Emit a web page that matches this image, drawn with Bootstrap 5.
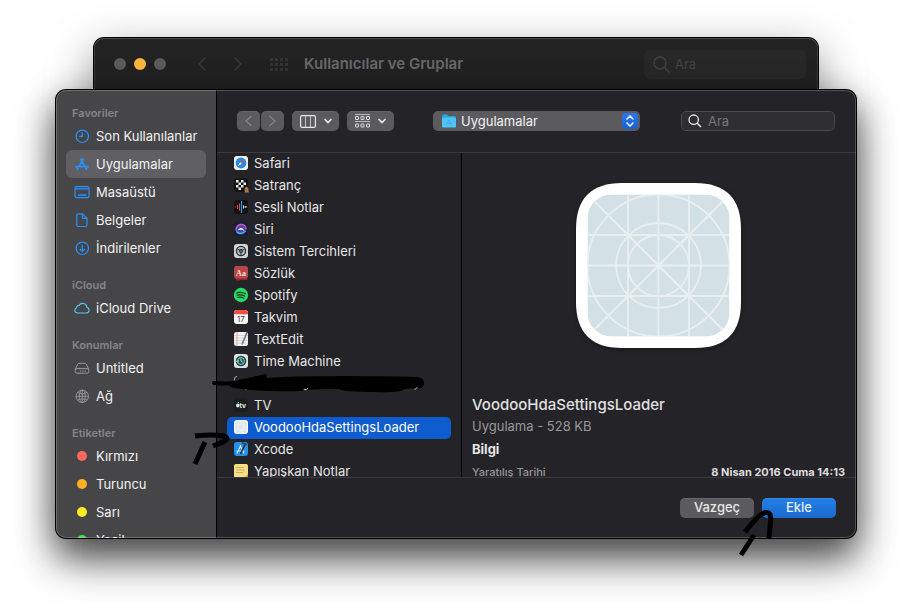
<!DOCTYPE html>
<html lang="tr">
<head>
<meta charset="utf-8">
<meta name="viewport" content="width=device-width, initial-scale=1">
<title>Kullanıcılar ve Gruplar</title>
<link href="https://cdn.jsdelivr.net/npm/bootstrap@5.3.0/dist/css/bootstrap.min.css" rel="stylesheet">
<style>
body{background:#fff;font-family:Inter,"Liberation Sans",sans-serif;font-size:13px;line-height:20px;color:#e2e2e3;height:100vh;overflow:hidden;padding:38px 56px 0}
svg{display:block;flex:none}
.back-win{margin:0 38px;height:52px;background:#222223;border-radius:10px 10px 0 0;padding:0 12px 0 20px;box-shadow:0 0 0 1px #000,inset 0 1px 0 #4b4b4c,inset 1px 0 0 #3b3b3c,inset -1px 0 0 #3b3b3c,0 16px 44px rgba(0,0,0,.5)}
.light{width:12px;height:12px;border-radius:50%;background:#5b5a5f;border:0;padding:0}
.light-min{background:#fdb63e}
.ghost-btn{background:none;border:0;padding:0;color:#3a3a3c}
.ghost-grid{color:#343436}
.back-title{font-size:15px;font-weight:600;color:#69696b;margin:0}
.back-search{width:162px;height:29px;border-radius:6px;background:#282829;color:#434345;padding:0 9px;gap:5px}
.back-search input,.find input{background:none;border:0;outline:0;color:inherit;padding:0;min-width:0}
.back-search input::placeholder{color:#434345}
.sheet{height:calc(100vh - 164px);background:#242328;border-radius:10px;box-shadow:0 0 0 1px #000,0 22px 40px rgba(0,0,0,.62),0 8px 34px rgba(0,0,0,.34)}
.sheet-body{border-radius:10px;overflow:hidden}
.sheet-rim{position:absolute;inset:0;border-radius:10px;border:1px solid rgba(255,255,255,.22);pointer-events:none}
.side{width:161px;flex:none;background:#464648;border-right:1px solid #000;padding:0 10px;overflow:hidden}
.side-head{font-size:11px;font-weight:600;line-height:18px;color:#858587;padding:14px 6px 0;margin:0}
.side-link{height:28px;padding:0 8px;gap:6px;border-radius:6px;color:#f2f2f3;font-weight:400;text-decoration:none;white-space:nowrap}
.side-link.active{background:#605f64}
.side-link svg{width:16px;height:16px;color:#2791ff}
.side-link svg.dim{color:#9a9a9c}
.side-link svg.sky{color:#54c5fa}
.tools{height:63px;padding:0 21px 0 20px;border-bottom:1px solid #3b3a40;flex:none}
.tool{height:20px;border:0;border-radius:5px;background:#5b5a5f;color:#e6e6e7;padding:0;box-shadow:inset 0 1px 0 rgba(255,255,255,.06)}
.tool-pair{gap:1px}
.tool-nav{width:23px;color:#858489}
.tool-view{width:47px}
.place{height:20px;margin:0 41px 0 39px;border-radius:5px;background:#5b5a5f}
.place>*{grid-area:1/1}
.place select{appearance:none;background:none;border:0;outline:0;color:#f2f2f3;font-size:13px;line-height:20px;padding:0 24px 0 28px;width:100%;height:20px}
.place option{color:#000}
.knob{width:16px;height:16px;border-radius:4px;background:linear-gradient(#2a7af0,#1a5fd4);pointer-events:none;margin-right:2px}
.find{width:154px;height:20px;border-radius:5px;background:#2f2e33;border:1px solid #4a494e;padding:0 6px;gap:6px;color:#e6e6e7}
.find input::placeholder{color:#77767b}
.files{width:245px;flex:none;border-right:1px solid #000;padding:0 10px;overflow:hidden}
.file{height:22px;line-height:20px;padding:0 7px 2px;gap:6px;border-radius:5px;color:#e6e6e7;font-weight:400;text-decoration:none;white-space:nowrap}
.file.active{background:#0f5ccf;color:#fff}
.file svg{width:14px;height:14px;overflow:visible}
.preview{padding:30px 11px 0 10px;overflow:hidden}
.app-art{width:165px;height:165px;filter:drop-shadow(0 1px 2px rgba(0,0,0,.4))}
.app-name{font-size:15px;line-height:20px;font-weight:500;color:#e0e0e1;margin:47px 0 0}
.app-kind{line-height:22px;color:#98979b;margin:0}
.app-info{font-size:13px;line-height:24px;font-weight:700;color:#e6e6e7;margin:0}
.app-meta{font-size:11px;line-height:22px;margin:0}
.app-meta dt{font-weight:500;color:#98979b}
.app-meta dd{font-weight:700;color:#dcdcdd;margin:0}
.foot{height:61px;border-top:1px solid #3b3a40;padding:0 20px;gap:8px;flex:none}
.act{width:74px;height:20px;border:0;border-radius:5px;background:#5b5a5f;color:#e6e6e7;font-size:13px;line-height:18px;font-weight:500;padding:0 0 2px;box-shadow:inset 0 1px 0 rgba(255,255,255,.08)}
.act-main{background:linear-gradient(#2280e6,#1c69cd);color:#e8effa}
.ink{position:absolute;left:154px;top:280px;pointer-events:none}
</style>
<script src="https://cdn.jsdelivr.net/npm/bootstrap@5.3.0/dist/js/bootstrap.bundle.min.js"></script>
</head>
<body>
<header class="back-win d-flex align-items-center">
  <div class="d-flex gap-2">
    <button class="light" aria-label="Kapat"></button><button class="light light-min" aria-label="Küçült"></button><button class="light" aria-label="Büyüt"></button>
  </div>
  <button class="ghost-btn ms-4 ps-2" aria-label="Geri"><svg width="8" height="14" fill="none" stroke="currentColor" stroke-width="1.3"><path d="M7.500 0.500L1 7l6.500 6.500"/></svg></button>
  <button class="ghost-btn ms-4 ps-1" aria-label="İleri"><svg width="8" height="14" fill="none" stroke="currentColor" stroke-width="1.300"><path d="M0.500 0.500L7 7L0.500 13.500"/></svg></button>
  <button class="ghost-btn ghost-grid ms-4 ps-1" aria-label="Tümünü göster"><svg width="18" height="13" stroke="currentColor" stroke-width="3" stroke-dasharray="3 2"><path d="M0 1.500h18M0 6.500h18M0 11.500h18"/></svg></button>
  <h1 class="back-title ms-3">Kullanıcılar ve Gruplar</h1>
  <label class="back-search d-flex align-items-center ms-auto"><svg width="17" height="17" fill="none" stroke="currentColor" stroke-width="1.300"><circle cx="7" cy="7" r="6"/><path d="M11.500 11.500l5 5"/></svg><input class="w-100" type="search" placeholder="Ara" aria-label="Ara"></label>
</header>

<main class="sheet position-relative">
  <div class="sheet-body d-flex h-100">
    <nav class="side">
      <h2 class="side-head">Favoriler</h2>
      <a href="#" class="side-link d-flex align-items-center"><svg viewBox="0 0 16 16" fill="none" stroke="currentColor" stroke-width="1.200"><circle cx="8.300" cy="8.300" r="6.200"/><path d="M8.300 4.200V8.300H5"/></svg>Son Kullanılanlar</a>
      <a href="#" class="side-link active d-flex align-items-center"><svg viewBox="0 0 16 16" fill="none" stroke="currentColor" stroke-width="1.800" stroke-linecap="round"><path d="M9.200 3.200L4.900 10.600M6.800 3.200L12.600 13.400M2 10.700h6.800M12.300 10.700H14M3.300 13.200l.4-.6"/></svg>Uygulamalar</a>
      <a href="#" class="side-link d-flex align-items-center"><svg viewBox="0 0 16 16" fill="none" stroke="currentColor" stroke-width="1.200"><rect x="1" y="2.600" width="14" height="11" rx="1.500"/><path d="M1 4.800h14"/><path d="M4 11h8.500" stroke-width="1.600"/></svg>Masaüstü</a>
      <a href="#" class="side-link d-flex align-items-center"><svg viewBox="0 0 16 16" fill="none" stroke="currentColor" stroke-width="1.200" stroke-linejoin="round"><path d="M8.500 1.900H4.200a1.400 1.400 0 0 0-1.400 1.400v9.800a1.400 1.400 0 0 0 1.400 1.400h7.400a1.400 1.400 0 0 0 1.400-1.400V6.400zM8.500 1.900v3.500a1 1 0 0 0 1 1H13"/></svg>Belgeler</a>
      <a href="#" class="side-link d-flex align-items-center"><svg viewBox="0 0 16 16" fill="none" stroke="currentColor" stroke-width="1.200"><circle cx="8.300" cy="8.300" r="6.200"/><path d="M8.300 4.800v6.500M5.900 9L8.300 11.400l2.400-2.400"/></svg>İndirilenler</a>
      <h2 class="side-head">iCloud</h2>
      <a href="#" class="side-link d-flex align-items-center"><svg class="sky" viewBox="0 0 16 16" fill="none" stroke="currentColor" stroke-width="1.200"><path d="M3.500 13h9a2.900 2.900 0 0 0 .4-5.700A4.300 4.300 0 0 0 5 5.400 2.400 2.400 0 0 0 2.500 7.800 2.700 2.700 0 0 0 3.500 13z"/></svg>iCloud Drive</a>
      <h2 class="side-head">Konumlar</h2>
      <a href="#" class="side-link d-flex align-items-center"><svg class="dim" viewBox="0 0 16 16" fill="none" stroke="currentColor" stroke-width="1"><path d="M1.300 9.300L3.700 4.200a1.500 1.500 0 0 1 1.300-.9h6a1.500 1.500 0 0 1 1.300.9l2.400 5.100"/><rect x="1.200" y="8.600" width="13.600" height="4.600" rx="1.700"/><path d="M6 11h6" stroke-dasharray="1 .6"/></svg>Untitled</a>
      <a href="#" class="side-link d-flex align-items-center"><svg class="dim" viewBox="0 0 16 16" fill="none" stroke="currentColor" stroke-width=".9"><circle cx="8.300" cy="8.300" r="6.200"/><ellipse cx="8.300" cy="8.300" rx="3" ry="6.200"/><path d="M8.300 2.100v12.400M2.100 8.300h12.400M3.600 4.600q4.700 2.600 9.400 0M3.600 12q4.700-2.600 9.400 0"/></svg>Ağ</a>
      <h2 class="side-head">Etiketler</h2>
      <a href="#" class="side-link d-flex align-items-center"><svg viewBox="0 0 16 16"><circle cx="8" cy="8" r="5" fill="#ff6961"/></svg>Kırmızı</a>
      <a href="#" class="side-link d-flex align-items-center"><svg viewBox="0 0 16 16"><circle cx="8" cy="8" r="5" fill="#ffb020"/></svg>Turuncu</a>
      <a href="#" class="side-link d-flex align-items-center"><svg viewBox="0 0 16 16"><circle cx="8" cy="8" r="5" fill="#ffec1f"/></svg>Sarı</a>
      <a href="#" class="side-link d-flex align-items-center"><svg viewBox="0 0 16 16"><circle cx="8" cy="8" r="5" fill="#3fe04f"/></svg>Yeşil</a>
    </nav>

    <section class="d-flex flex-column flex-grow-1">
      <div class="tools d-flex align-items-center">
        <div class="tool-pair d-flex">
          <button class="tool tool-nav d-flex align-items-center justify-content-center" aria-label="Geri"><svg width="7" height="12" fill="none" stroke="currentColor" stroke-width="1.200"><path d="M6.500 1l-5.500 5 5.500 5"/></svg></button>
          <button class="tool tool-nav d-flex align-items-center justify-content-center" aria-label="İleri"><svg width="7" height="12" fill="none" stroke="currentColor" stroke-width="1.200"><path d="M.5 1L6 6l-5.500 5"/></svg></button>
        </div>
        <button class="tool tool-view d-flex align-items-center justify-content-center gap-2 ms-2" aria-label="Sütun görünümü"><svg width="16" height="13" fill="none" stroke="currentColor"><rect x=".6" y=".6" width="14.800" height="11.800" rx="1.500" stroke-width="1.200"/><path d="M5.500 1v11M10.500 1v11" stroke-opacity=".75"/></svg><svg width="8" height="6" fill="none" stroke="currentColor" stroke-width="1.700" stroke-linecap="round"><path d="M1 1.500l3 3 3-3"/></svg></button>
        <button class="tool tool-view d-flex align-items-center justify-content-center gap-2 ms-2" aria-label="Gruplama"><svg width="15" height="14" fill="none" stroke="currentColor"><path d="M0 .5h15M0 7.500h15" stroke-opacity=".7"/><rect x=".5" y="2.500" width="3" height="3" rx=".5"/><rect x="6" y="2.500" width="3" height="3" rx=".5"/><rect x="11.500" y="2.500" width="3" height="3" rx=".5"/><rect x=".5" y="10" width="3" height="3" rx=".5"/><rect x="6" y="10" width="3" height="3" rx=".5"/><rect x="11.500" y="10" width="3" height="3" rx=".5"/></svg><svg width="8" height="6" fill="none" stroke="currentColor" stroke-width="1.700" stroke-linecap="round"><path d="M1 1.500l3 3 3-3"/></svg></button>
        <div class="place d-grid align-items-center flex-grow-1">
          <svg class="ms-2" width="16" height="14"><path d="M1 2q0-1.500 1.500-1.500h3.500l1.500 1.500h6q1.500 0 1.500 1.500V5H1z" fill="#2ba3dc"/><rect x="1" y="3.500" width="14" height="10" rx="1.200" fill="#4fc3f5"/><path d="M8 6l-2.600 4.500M8 6l2.600 4.500M5.500 9.500h5" stroke="#3bb0e6" fill="none"/></svg>
          <select aria-label="Konum"><option>Uygulamalar</option></select>
          <span class="knob d-flex align-items-center justify-content-center ms-auto"><svg width="8" height="12" fill="none" stroke="#fff" stroke-width="1.500" stroke-linecap="round" stroke-linejoin="round"><path d="M1 4l3-3 3 3M1 8l3 3 3-3"/></svg></span>
        </div>
        <label class="find d-flex align-items-center"><svg width="14" height="14" fill="none" stroke="currentColor" stroke-width="1.300"><circle cx="5.700" cy="5.700" r="4.700"/><path d="M9 9l4 4" stroke-width="1.600"/></svg><input class="w-100" type="search" placeholder="Ara" aria-label="Ara"></label>
      </div>

      <div class="d-flex flex-grow-1 overflow-hidden">
        <div class="files">
          <a href="#" class="file d-flex align-items-center"><svg viewBox="0 0 14 14"><rect width="14" height="14" rx="3" fill="#f2f2f3"/><circle cx="7" cy="7" r="5.400" fill="#238ae8"/><path d="M10.800 3.200L6.200 6.200l1.600 1.600z" fill="#ff463c"/><path d="M3.200 10.800l3-4.600 1.600 1.600z" fill="#fff"/></svg>Safari</a>
          <a href="#" class="file d-flex align-items-center"><svg viewBox="0 0 14 14"><rect width="14" height="14" rx="3" fill="#151515"/><path d="M2 2h2.500v2.500H2zM7 2h2.500v2.500H7zM4.500 4.500H7V7H4.500zM9.500 4.500H12V7H9.500zM2 7h2.500v2.500H2zM7 7h2.500v2.500H7zM4.500 9.500H7V12H4.500z" fill="#eee"/><path d="M10.500 14.500q.8-2.500 0-4l1.800-2 2 1.500q.2 2 .5 4.500z" fill="#a9794a"/></svg>Satranç</a>
          <a href="#" class="file d-flex align-items-center"><svg viewBox="0 0 14 14"><rect width="14" height="14" rx="3" fill="#111"/><path d="M1.500 6.500v1M3.500 5v4M5.500 3.500v7" stroke="#e5484a"/><path d="M7.500 1v12" stroke="#2b9cf5" stroke-width="1.200"/><path d="M9.500 5.500v3M11.200 6v2M12.700 6.500v1" stroke="#ddd"/></svg>Sesli Notlar</a>
          <a href="#" class="file d-flex align-items-center"><svg viewBox="0 0 14 14"><rect width="14" height="14" rx="3" fill="#1b1c3d"/><circle cx="7" cy="7" r="5.600" fill="#4d46a8"/><path d="M2 8.500q.5-6 5.500-6.200Q12 3 12.200 7" stroke="#c65ab5" stroke-width="1.300" fill="none"/><path d="M2.500 9.500q3.500 4 9-.5" stroke="#30b9dd" stroke-width="1.500" fill="none"/><path d="M3.800 8.200q3.700-5.400 6.600.8-3.200-2.200-6.600-.8z" fill="#f2f5ff"/></svg>Siri</a>
          <a href="#" class="file d-flex align-items-center"><svg viewBox="0 0 14 14"><rect width="14" height="14" rx="3" fill="#ced4d7"/><circle cx="7" cy="7" r="4.600" fill="#b8bdc0" stroke="#303438" stroke-width="1.400"/><circle cx="7" cy="7" r="1.700" fill="none" stroke="#303438"/><path d="M7 7L3.500 5M7 7v4M7 7l3.500-2" stroke="#303438"/></svg>Sistem Tercihleri</a>
          <a href="#" class="file d-flex align-items-center"><svg viewBox="0 0 14 14"><path d="M1 10h12v4H6l-1 1-1-1-.7 1-1-1z" fill="#8c2a2c"/><rect width="14" height="12.500" rx="2.500" fill="#b84648"/><text x="7" y="9.500" text-anchor="middle" font-family="Liberation Serif" font-weight="700" font-size="8" fill="#f6dfdd">Aa</text></svg>Sözlük</a>
          <a href="#" class="file d-flex align-items-center"><svg viewBox="0 0 14 14"><circle cx="7" cy="7" r="7.200" fill="#2cd765"/><path d="M2.800 4.800q4.500-1.300 8.500 1M3.200 7.200q4-1 7.400.9M3.700 9.400q3.200-.8 6 .8" stroke="#123a20" stroke-width="1.200" stroke-linecap="round" fill="none"/></svg>Spotify</a>
          <a href="#" class="file d-flex align-items-center"><svg viewBox="0 0 14 14"><rect width="14" height="14" rx="3" fill="#f7f7f7"/><path d="M0 4.200V3a3 3 0 0 1 3-3h8a3 3 0 0 1 3 3v1.200z" fill="#f54c44"/><text x="7" y="11.800" text-anchor="middle" font-size="8" fill="#444">17</text></svg>Takvim</a>
          <a href="#" class="file d-flex align-items-center"><svg viewBox="0 0 14 14"><rect width="14" height="14" rx="2.500" fill="#f4f4f4"/><path d="M0 3.500h14M0 6h14M0 8.500h14M0 11h14" stroke="#c5c8cc" stroke-width=".7"/><path d="M3 0v14" stroke="#ec8d8d" stroke-width=".8"/><path d="M13 .5L8 12.500" stroke="#6e7d8d" stroke-width="1.700"/></svg>TextEdit</a>
          <a href="#" class="file d-flex align-items-center"><svg viewBox="0 0 14 14"><rect width="14" height="14" rx="3" fill="#dde3e2"/><circle cx="7" cy="7" r="5.300" fill="#164c4b"/><circle cx="7" cy="7" r="3.400" fill="none" stroke="#a6d8cf" stroke-width=".9"/><path d="M7 4.500V7l1.800 1.200M1.800 6.500l1.600 1.600L5 6.500" stroke="#e8f5f2" fill="none" stroke-width=".9"/></svg>Time Machine</a>
          <a href="#" class="file d-flex align-items-center" aria-label="Uygulama"><svg viewBox="0 0 14 14"><path d="M.5 4.500V3A2.500 2.500 0 0 1 3 .5M11 13.500h1.500q1-.5 1-1.500" fill="none" stroke="#a9a9ab"/></svg></a>
          <a href="#" class="file d-flex align-items-center"><svg viewBox="0 0 14 14"><rect width="14" height="14" rx="3" fill="#17201f"/><ellipse cx="3.800" cy="7.500" rx="1.700" ry="1.900" fill="#eee"/><path d="M4 5l.8-1" stroke="#eee" stroke-width=".8"/><text x="5.500" y="9.500" font-size="6.500" font-weight="700" fill="#eee">tv</text></svg>TV</a>
          <a href="#" class="file active d-flex align-items-center"><svg viewBox="0 0 14 14"><rect width="14" height="14" rx="3" fill="#fff"/><rect x="1.200" y="1.200" width="11.600" height="11.600" rx="2" fill="#dde7eb"/><path d="M4.500 1v12M9.500 1v12M1 4.500h12M1 9.500h12" stroke="#eaf0f2" stroke-width=".6"/><circle cx="7" cy="7" r="3.400" fill="none" stroke="#f2f6f7" stroke-width=".7"/></svg>VoodooHdaSettingsLoader</a>
          <a href="#" class="file d-flex align-items-center"><svg viewBox="0 0 14 14"><rect width="14" height="14" rx="3" fill="#2492ed"/><path d="M7 3L3 11.500M6 3.500l4 8M2.500 9h8" stroke="#d8efff" stroke-width="1.100"/><path d="M11.500 1.500L6.500 12" stroke="#25323f" stroke-width="1.600"/><path d="M8 .8l4.700 2" stroke="#3b4550" stroke-width="2"/></svg>Xcode</a>
          <a href="#" class="file d-flex align-items-center"><svg viewBox="0 0 14 14"><rect width="14" height="14" rx="2" fill="#f6df86"/><path d="M2 3.500h8M2 6h9M2 8.500h7" stroke="#bca552" stroke-width=".8"/><path d="M10 14l4-4v2a2 2 0 0 1-2 2z" fill="#c9a73f"/></svg>Yapışkan Notlar</a>
        </div>
        <article class="preview flex-grow-1">
          <svg class="app-art mx-auto" viewBox="0 0 165 165" role="img" aria-label="Uygulama simgesi">
            <defs><clipPath id="plate"><rect x="11.500" y="11.500" width="142" height="142" rx="24"/></clipPath></defs>
            <path d="M46 0h73q46 0 46 46v73q0 46-46 46H46q-46 0-46-46V46Q0 0 46 0z" fill="#fff"/>
            <g clip-path="url(#plate)"><rect x="11.500" y="11.500" width="142" height="142" fill="#d3e0e6"/>
            <g fill="none" stroke="#e9eff1" stroke-width="1.800"><path d="M52 10v145M82.500 10v145M113 10v145M10 52h145M10 82.500h145M10 113h145"/><path d="M10 10l145 145M155 10L10 155" stroke-width="2.200"/><circle cx="82.500" cy="82.500" r="30.500"/><circle cx="82.500" cy="82.500" r="42.500"/><circle cx="82.500" cy="82.500" r="71"/></g></g>
          </svg>
          <h2 class="app-name">VoodooHdaSettingsLoader</h2>
          <p class="app-kind">Uygulama - 528 KB</p>
          <h3 class="app-info">Bilgi</h3>
          <dl class="app-meta d-flex justify-content-between"><dt>Yaratılış Tarihi</dt><dd>8 Nisan 2016 Cuma 14:13</dd></dl>
        </article>
      </div>

      <div class="foot d-flex align-items-center justify-content-end">
        <button class="act">Vazgeç</button>
        <button class="act act-main">Ekle</button>
      </div>
    </section>
  </div>
  <div class="sheet-rim"></div>
  <!-- hand-drawn marks over the window -->
  <svg class="ink" width="572" height="190" viewBox="210 370 572 190" overflow="visible" fill="none" stroke="#000" stroke-linecap="round">
    <path d="M214 383q12 1 22 0" stroke-width="4"/>
    <path d="M229 382l37-8 1 4 15-1q60-2 136 0 6 1 6 6 0 5-5 5-6 0-14 1-4 4-30 3-32 0-36-3-20 0-34 1-4 2-34 1-30-1-40-4-4-2-2-5z" fill="#000" stroke="none"/>
    <path d="M304 389.500q3 1 4-1M415 389.500l2-2" stroke="#c8c8ca" stroke-width="1"/>
    <path d="M195 436q18-2 29 0 8 3-6 8l-5 2M205 442l-10 22" stroke-width="5" stroke-linecap="butt"/>
    <path d="M745 532q14-18 20-19.500 7-1 5.500 9l-1.500 16.500M754 535l-13 20" stroke-width="5" stroke-linecap="butt"/>
  </svg>
</main>
</body>
</html>
